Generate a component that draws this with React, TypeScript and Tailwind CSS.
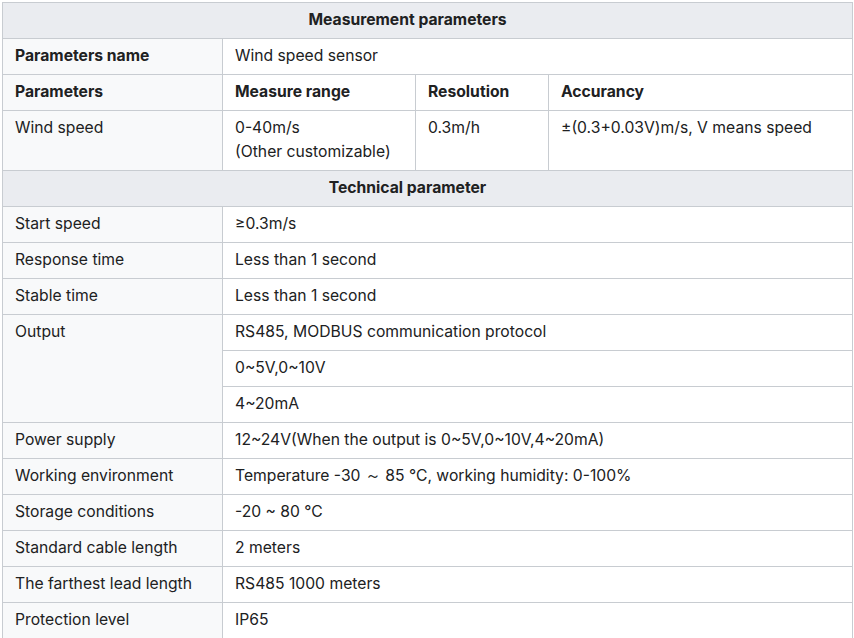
import React from "react";

const td = "border border-[#c8ccd1] px-3 pt-[5px] pb-[6px] align-top text-left";
const left = td + " bg-[#f8f9fa]";
const head = "border border-[#c8ccd1] bg-[#eaecf0] pt-[5px] pb-[6px] pr-[40px] text-center font-bold";

export default function App() {
  const tech: [string, string][] = [
    ["Start speed", "≥0.3m/s"],
    ["Response time", "Less than 1 second"],
    ["Stable time", "Less than 1 second"],
  ];
  const rest: [string, string][] = [
    ["Power supply", "12~24V(When the output is 0~5V,0~10V,4~20mA)"],
    ["Working environment", "Temperature -30 ～ 85 ℃, working humidity: 0-100%"],
    ["Storage conditions", "-20 ~ 80 ℃"],
    ["Standard cable length", "2 meters"],
    ["The farthest lead length", "RS485 1000 meters"],
    ["Protection level", "IP65"],
  ];
  return (
    <div className="bg-white w-[854px] h-[638px] overflow-hidden pt-[2px] pl-[2px]" style={{ fontFamily: "Inter, 'Noto Sans', sans-serif" }}>
      <table className="border-collapse w-[850px] table-fixed text-[15.7px] leading-[24px] text-[#202122]">
        <colgroup>
          <col className="w-[220px]" />
          <col className="w-[193px]" />
          <col className="w-[133px]" />
          <col className="w-[304px]" />
        </colgroup>
        <tbody>
          <tr>
            <th colSpan={4} className={head}>Measurement parameters</th>
          </tr>
          <tr>
            <td className={left + " font-bold"}>Parameters name</td>
            <td colSpan={3} className={td}>Wind speed sensor</td>
          </tr>
          <tr>
            <td className={left + " font-bold"}>Parameters</td>
            <td className={td + " font-bold"}>Measure range</td>
            <td className={td + " font-bold"}>Resolution</td>
            <td className={td + " font-bold"}>Accurancy</td>
          </tr>
          <tr>
            <td className={left}>Wind speed</td>
            <td className={td}>0-40m/s<br />(Other customizable)</td>
            <td className={td}>0.3m/h</td>
            <td className={td}>±(0.3+0.03V)m/s, V means speed</td>
          </tr>
          <tr>
            <th colSpan={4} className={head}>Technical parameter</th>
          </tr>
          {tech.map(([a, b]) => (
            <tr key={a}>
              <td className={left}>{a}</td>
              <td colSpan={3} className={td}>{b}</td>
            </tr>
          ))}
          <tr>
            <td rowSpan={3} className={left}>Output</td>
            <td colSpan={3} className={td}>RS485, MODBUS communication protocol</td>
          </tr>
          <tr>
            <td colSpan={3} className={td}>0~5V,0~10V</td>
          </tr>
          <tr>
            <td colSpan={3} className={td}>4~20mA</td>
          </tr>
          {rest.map(([a, b]) => (
            <tr key={a}>
              <td className={left}>{a}</td>
              <td colSpan={3} className={td}>{b}</td>
            </tr>
          ))}
        </tbody>
      </table>
    </div>
  );
}
